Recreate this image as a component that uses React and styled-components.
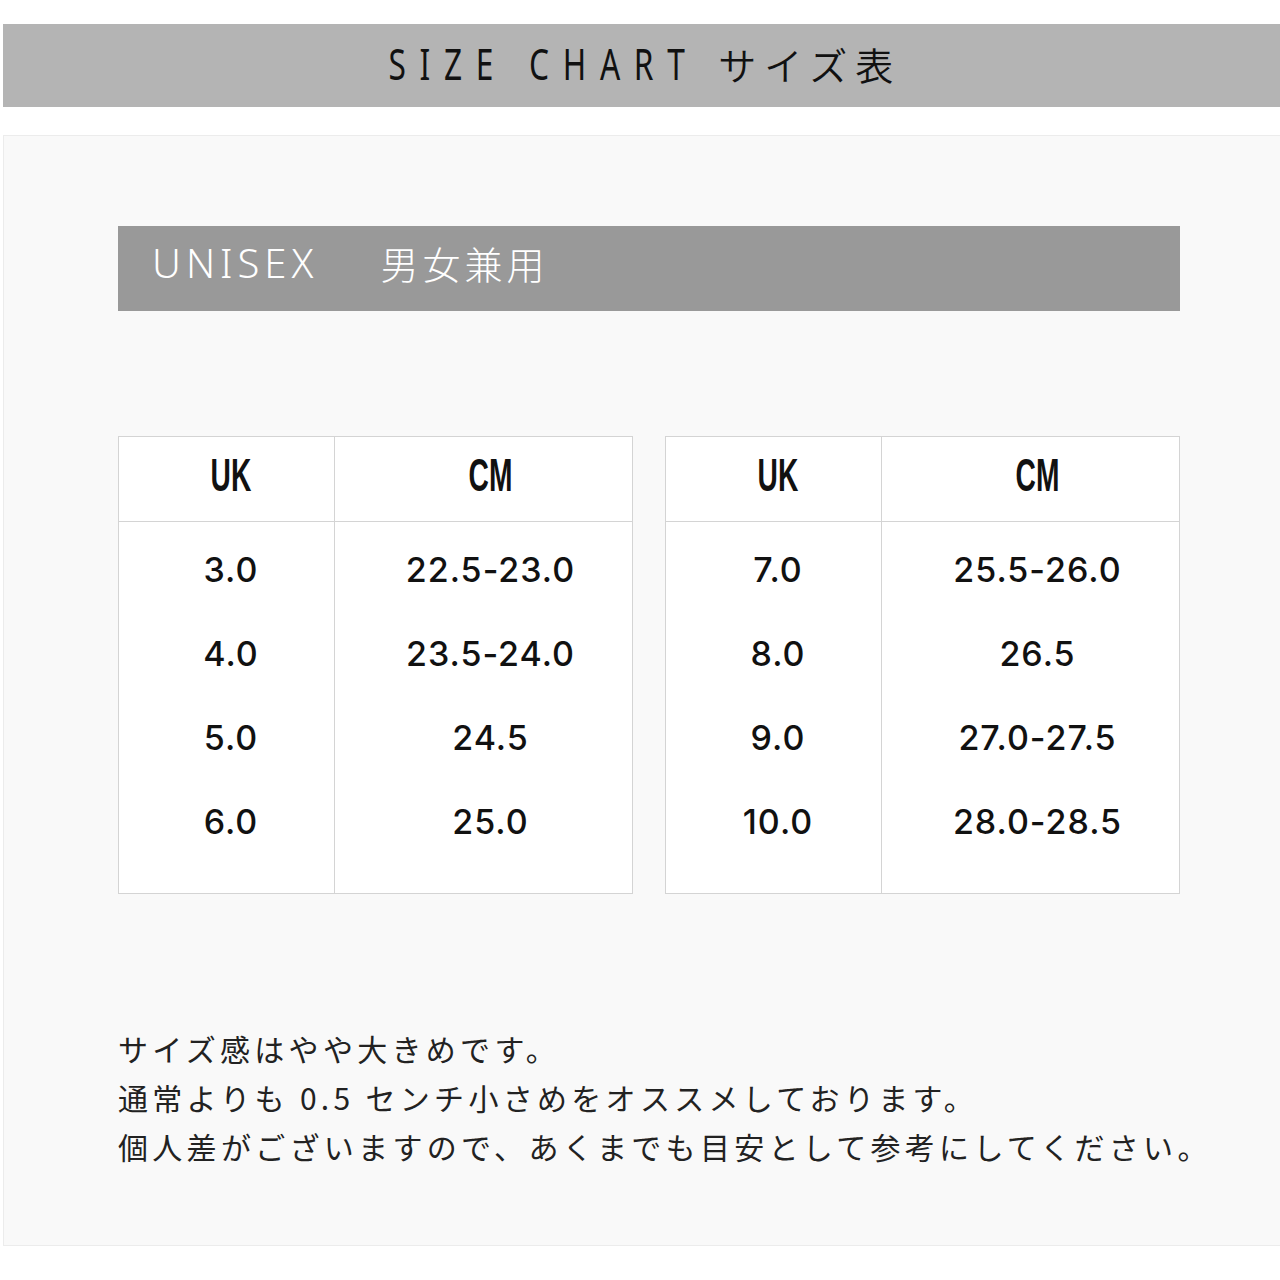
import React from "react";
import styled, { createGlobalStyle } from "styled-components";

const GlobalStyle = createGlobalStyle`
  body {
    margin: 0;
    background: #ffffff;
    font-family: "Noto Sans CJK JP", "Noto Sans", sans-serif;
  }
`

const Page = styled.div`
  width: 1280px;
  padding: 24px 0 0 3px;
  box-sizing: border-box;
`

const TitleBar = styled.div`
  height: 83px;
  background: #b4b4b4;
  display: flex;
  align-items: center;
  justify-content: center;
  padding: 0 0 5px 8px;
  box-sizing: border-box;
  color: #111;
`

// narrow latin face: squeeze the light sans horizontally
const TitleLatin = styled.span`
  display: inline-block;
  font-family: "Noto Sans", sans-serif;
  font-weight: 400;
  font-size: 44px;
  letter-spacing: 19px;
  transform: scaleX(0.72);
  transform-origin: right center;
  margin-left: -122px;
  white-space: nowrap;
`

const TitleJa = styled.span`
  font-family: "Noto Sans CJK JP", sans-serif;
  font-weight: 350;
  font-size: 38px;
  letter-spacing: 8px;
  margin-left: 20px;
`

const Panel = styled.div`
  margin-top: 28px;
  height: 1111px;
  box-sizing: border-box;
  background: #f9f9f9;
  border: 1px solid #ececec;
  border-right: none;
  padding: 90px 100px 0 114px;
`

const GenderBar = styled.div`
  height: 85px;
  background: #999999;
  color: #ffffff;
  display: flex;
  align-items: center;
  padding: 0 0 12px 34px;
  box-sizing: border-box;
  font-weight: 300;
  font-size: 40px;
`

const GenderEn = styled.span`
  font-family: "Noto Sans", sans-serif;
  letter-spacing: 5px;
`

const GenderJa = styled.span`
  margin-left: 62px;
  letter-spacing: 4px;
  font-size: 38px;
`

const Tables = styled.div`
  margin-top: 125px;
  display: grid;
  grid-template-columns: 515px 515px;
  gap: 32px;
`

const Table = styled.div`
  background: #ffffff;
  border: 1px solid #d4d4d4;
  display: grid;
  grid-template-columns: 215px 1fr;
`

const Col = styled.div`
  display: flex;
  flex-direction: column;
  border-left: ${({ first }) => (first ? "none" : "1px solid #d4d4d4")};
  --shift: ${({ first }) => (first ? "9px" : "14px")};
`

const HeadCell = styled.div`
  height: 74px;
  border-bottom: 1px solid #d4d4d4;
  display: flex;
  align-items: center;
  justify-content: center;
  padding: 0 0 10px var(--shift);
`

const HeadText = styled.span`
  display: inline-block;
  font-family: "Liberation Sans Narrow", "Liberation Sans", sans-serif;
  font-weight: 700;
  font-size: 47px;
  color: #111;
  transform: scaleX(0.6);
  line-height: 1;
`

const Body = styled.div`
  padding: 5px 0 30px;
`

const Cell = styled.div`
  height: 84px;
  box-sizing: border-box;
  display: flex;
  align-items: center;
  justify-content: center;
  padding-left: var(--shift);
  font-family: Inter, "Liberation Sans", sans-serif;
  font-weight: 500;
  font-size: 34px;
  letter-spacing: 1px;
  color: #111;
`

const Notes = styled.div`
  margin-top: 130px;
  font-family: "Noto Sans CJK JP", sans-serif;
  font-weight: 400;
  font-size: 30px;
  line-height: 49px;
  letter-spacing: 4.3px;
  white-space: nowrap;
  color: #222;
`

const sizes = [
  [
    ["3.0", "22.5-23.0"],
    ["4.0", "23.5-24.0"],
    ["5.0", "24.5"],
    ["6.0", "25.0"],
  ],
  [
    ["7.0", "25.5-26.0"],
    ["8.0", "26.5"],
    ["9.0", "27.0-27.5"],
    ["10.0", "28.0-28.5"],
  ],
]

const SizeTable = ({ rows }) => (
  <Table>
    <Col first>
      <HeadCell><HeadText>UK</HeadText></HeadCell>
      <Body>
        {rows.map(([uk]) => <Cell key={uk}>{uk}</Cell>)}
      </Body>
    </Col>
    <Col>
      <HeadCell><HeadText>CM</HeadText></HeadCell>
      <Body>
        {rows.map(([uk, cm]) => <Cell key={uk}>{cm}</Cell>)}
      </Body>
    </Col>
  </Table>
)

export default function App() {
  return (
    <Page>
      <GlobalStyle />
      <TitleBar>
        <TitleLatin>SIZE CHART</TitleLatin>
        <TitleJa>サイズ表</TitleJa>
      </TitleBar>
      <Panel>
        <GenderBar>
          <GenderEn>UNISEX</GenderEn>
          <GenderJa>男女兼用</GenderJa>
        </GenderBar>
        <Tables>
          {sizes.map((rows, i) => <SizeTable key={i} rows={rows} />)}
        </Tables>
        <Notes>
          <div>サイズ感はやや大きめです。</div>
          <div>通常よりも 0.5 センチ小さめをオススメしております。</div>
          <div>個人差がございますので、あくまでも目安として参考にしてください。</div>
        </Notes>
      </Panel>
    </Page>
  )
}
